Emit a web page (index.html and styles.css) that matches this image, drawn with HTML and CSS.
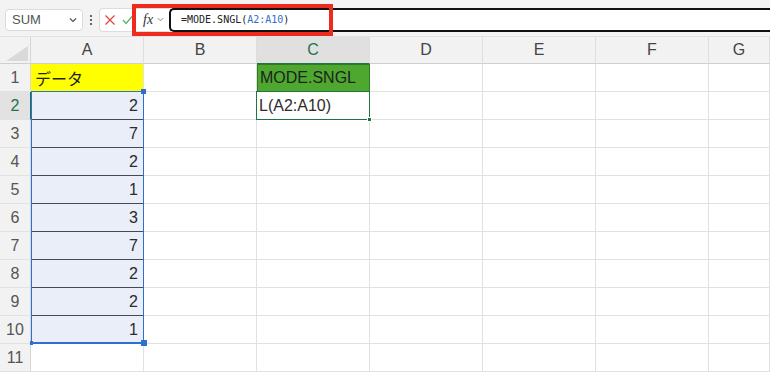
FILE: index.html
```html
<!DOCTYPE html>
<html lang="ja">
<head>
    <meta charset="UTF-8">
    <meta name="viewport" content="width=device-width, initial-scale=1.0">
    <title>MODE.SNGL</title>
    <link rel="stylesheet" href="styles.css">
</head>
<body>

    <div class="toolbar">
        <div class="namebox">
            <span>SUM</span>
            <svg width="10" height="10" viewBox="0 0 10 10"><path d="M2 3.5 L5 6.5 L8 3.5" fill="none" stroke="#555" stroke-width="1.2"/></svg>
        </div>
        <div class="kebab">
            <svg width="4" height="12" viewBox="0 0 4 12"><circle cx="2" cy="2" r="1.1" fill="#444"/><circle cx="2" cy="6" r="1.1" fill="#444"/><circle cx="2" cy="10" r="1.1" fill="#444"/></svg>
        </div>
        <div class="edits">
            <svg class="cancel" width="12" height="12" viewBox="0 0 12 12"><path d="M1.5 1.5 L10.5 10.5 M10.5 1.5 L1.5 10.5" stroke="#e0463c" stroke-width="1.3"/></svg>
            <svg class="enter" width="11" height="10" viewBox="0 0 11 10"><path d="M1 5 L4 8.5 L10 1.5" fill="none" stroke="#5fae6b" stroke-width="1.2"/></svg>
            <span class="fx">fx</span>
            <svg width="9" height="9" viewBox="0 0 10 10"><path d="M2 3.5 L5 6.5 L8 3.5" fill="none" stroke="#888" stroke-width="1.1"/></svg>
        </div>
        <div class="formula">=MODE.SNGL(<span class="ref">A2:A10</span>)</div>
        <div class="callout"></div>
    </div>

    <div class="sheet-wrap">
        <div class="sheet">
            <div class="cell corner">
                <svg width="22" height="15" viewBox="0 0 22 15"><path d="M22 0 L22 15 L0 15 Z" fill="#d9d9d9"/></svg>
            </div>
            <div class="cell colhead">A</div>
            <div class="cell colhead">B</div>
            <div class="cell colhead active">C</div>
            <div class="cell colhead">D</div>
            <div class="cell colhead">E</div>
            <div class="cell colhead">F</div>
            <div class="cell colhead">G</div>

            <div class="cell rowhead">1</div>
            <div class="cell yellow">データ</div>
            <div class="cell"></div>
            <div class="cell green">MODE.SNGL</div>
            <div class="cell"></div><div class="cell"></div><div class="cell"></div><div class="cell"></div>

            <div class="cell rowhead active">2</div>
            <div class="cell num range">2</div>
            <div class="cell"></div>
            <div class="cell editing">L(A2:A10)</div>
            <div class="cell"></div><div class="cell"></div><div class="cell"></div><div class="cell"></div>

            <div class="cell rowhead">3</div>
            <div class="cell num range">7</div>
            <div class="cell"></div><div class="cell"></div><div class="cell"></div><div class="cell"></div><div class="cell"></div><div class="cell"></div>

            <div class="cell rowhead">4</div>
            <div class="cell num range">2</div>
            <div class="cell"></div><div class="cell"></div><div class="cell"></div><div class="cell"></div><div class="cell"></div><div class="cell"></div>

            <div class="cell rowhead">5</div>
            <div class="cell num range">1</div>
            <div class="cell"></div><div class="cell"></div><div class="cell"></div><div class="cell"></div><div class="cell"></div><div class="cell"></div>

            <div class="cell rowhead">6</div>
            <div class="cell num range">3</div>
            <div class="cell"></div><div class="cell"></div><div class="cell"></div><div class="cell"></div><div class="cell"></div><div class="cell"></div>

            <div class="cell rowhead">7</div>
            <div class="cell num range">7</div>
            <div class="cell"></div><div class="cell"></div><div class="cell"></div><div class="cell"></div><div class="cell"></div><div class="cell"></div>

            <div class="cell rowhead">8</div>
            <div class="cell num range">2</div>
            <div class="cell"></div><div class="cell"></div><div class="cell"></div><div class="cell"></div><div class="cell"></div><div class="cell"></div>

            <div class="cell rowhead">9</div>
            <div class="cell num range">2</div>
            <div class="cell"></div><div class="cell"></div><div class="cell"></div><div class="cell"></div><div class="cell"></div><div class="cell"></div>

            <div class="cell rowhead">10</div>
            <div class="cell num range last">1</div>
            <div class="cell"></div><div class="cell"></div><div class="cell"></div><div class="cell"></div><div class="cell"></div><div class="cell"></div>

            <div class="cell rowhead">11</div>
            <div class="cell"></div>
            <div class="cell"></div><div class="cell"></div><div class="cell"></div><div class="cell"></div><div class="cell"></div><div class="cell"></div>
        </div>

        <!-- selection outlines, laid on the same grid -->
        <div class="overlay">
            <div class="ref-range">
                <span class="knob top-right"></span>
                <span class="knob bottom-right"></span>
                <span class="knob bottom-left"></span>
            </div>
            <div class="active-cell"><span class="knob handle"></span></div>
        </div>
    </div>

</body>
</html>
```

FILE: styles.css
```css
* {
    box-sizing: border-box;
}

body {
    margin: 0;
    width: 770px;
    height: 372px;
    overflow: hidden;
    background-color: #ffffff;
    font-family: 'Liberation Sans', 'Noto Sans CJK JP', sans-serif;
}

/* formula bar */
.toolbar {
    position: relative;
    height: 37px;
    padding: 3px 0 0 5px;
    display: flex;
    align-items: center;
    background-color: #f3f3f3;
    border-bottom: 1px solid #e2e2e2;
}

.namebox {
    width: 78px;
    height: 22px;
    padding: 0 4px 0 6px;
    display: flex;
    align-items: center;
    justify-content: space-between;
    background-color: #fff;
    border: 1px solid #dcdcdc;
    border-radius: 4px;
    font-size: 13px;
    color: #555;
}

.kebab {
    width: 16px;
    display: flex;
    justify-content: center;
}

.edits {
    width: 70px;
    height: 24px;
    padding-left: 4px;
    display: flex;
    align-items: center;
    background-color: #fff;
    border: 1px solid #dcdcdc;
    border-right: none;
    border-radius: 4px 0 0 4px;
}

.edits .enter {
    margin-left: 6px;
}

.edits .fx {
    margin-left: 10px;
    margin-right: 3px;
    font-family: 'Liberation Serif', serif;
    font-style: italic;
    font-size: 14px;
    color: #333;
}

.formula {
    flex: 1;
    height: 24px;
    padding-left: 10px;
    display: flex;
    align-items: center;
    background-color: #fff;
    border: 2px solid #111;
    border-right: none;
    border-radius: 5px 0 0 5px;
    font-family: 'DejaVu Sans Mono', monospace;
    font-size: 10px;
    color: #222;
}

.formula .ref {
    color: #2f6fc6;
}

.callout {
    position: absolute;
    left: 132px;
    top: 4px;
    width: 201px;
    height: 32px;
    border: 4px solid #ee2a1e;
}

/* grid */
.sheet-wrap {
    position: relative;
}

.sheet,
.overlay {
    display: grid;
    grid-template-columns: 31px repeat(6, 113px) 1fr;
    grid-template-rows: 27px repeat(11, 28px);
}

.sheet {
    font-size: 16px;
    color: #1f1f1f;
}

.overlay {
    position: absolute;
    inset: 0;
    pointer-events: none;
}

.cell {
    padding: 0 3px;
    display: flex;
    align-items: center;
    white-space: nowrap;
    overflow: hidden;
    border-right: 1px solid #e1e1e1;
    border-bottom: 1px solid #e1e1e1;
}

.corner {
    padding: 0 2px 2px 0;
    align-items: flex-end;
    justify-content: flex-end;
    background-color: #f2f2f2;
    border-right-color: #d6d6d6;
    border-bottom-color: #cfcfcf;
}

.colhead {
    justify-content: center;
    background-color: #f2f2f2;
    color: #444;
    border-right-color: #dedede;
    border-bottom-color: #cfcfcf;
}

.colhead.active {
    background-color: #e0e0e0;
    color: #217346;
    border-bottom: 1px solid #217346;
}

.rowhead {
    justify-content: center;
    padding: 0;
    background-color: #f2f2f2;
    color: #555;
    border-right-color: #d6d6d6;
}

.rowhead.active {
    background-color: #e2e2e2;
    color: #217346;
    border-right: 1px solid #217346;
}

.yellow {
    padding-left: 4px;
    background-color: #ffff00;
}

.green {
    padding-left: 2px;
    background-color: #4ea72e;
    border: 1px solid #2f7a22;
}

.editing {
    padding-left: 2px;
    color: #2b2b2b;
}

.num {
    justify-content: flex-end;
    padding-right: 5px;
    color: #2b2b2b;
}

.range {
    background-color: #e9eef8;
    border-bottom-color: #4a4a4a;
}

.range.last {
    border-bottom-color: #e1e1e1;
}

/* highlighted reference A2:A10 */
.ref-range {
    grid-column: 2;
    grid-row: 3 / 12;
    position: relative;
    margin-top: -1px;
    border: 1px solid #2f6fd0;
    border-bottom-width: 2px;
}

.knob {
    position: absolute;
    background-color: #2f6fd0;
}

.knob.top-right {
    right: -3px;
    top: -3px;
    width: 5px;
    height: 5px;
}

.knob.bottom-right {
    right: -4px;
    bottom: -4px;
    width: 6px;
    height: 6px;
}

.knob.bottom-left {
    left: -2px;
    bottom: -3px;
    width: 3px;
    height: 4px;
}

.active-cell {
    grid-column: 4;
    grid-row: 3;
    position: relative;
    margin: -1px 0 0 -1px;
    border: 1px solid #217346;
}

.knob.handle {
    right: -3px;
    bottom: -3px;
    width: 5px;
    height: 5px;
    background-color: #217346;
    border: 1px solid #fff;
}
```
